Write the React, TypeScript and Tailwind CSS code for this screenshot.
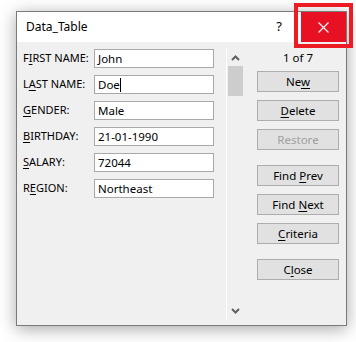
import React from 'react';

const font = { fontFamily: '"Noto Sans", "Open Sans", sans-serif' };

function Mn({ children }: { children: React.ReactNode }) {
    return <span className="underline underline-offset-[2px] decoration-1">{children}</span>;
}

const fields: { label: React.ReactNode; value: string; caret?: boolean }[] = [
    { label: <>F<Mn>I</Mn>RST NAME:</>, value: 'John' },
    { label: <>L<Mn>A</Mn>ST NAME:</>, value: 'Doe', caret: true },
    { label: <><Mn>G</Mn>ENDER:</>, value: 'Male' },
    { label: <><Mn>B</Mn>IRTHDAY:</>, value: '21-01-1990' },
    { label: <><Mn>S</Mn>ALARY:</>, value: '72044' },
    { label: <>R<Mn>E</Mn>GION:</>, value: 'Northeast' },
];

function Btn({ children, disabled, className = '' }: { children: React.ReactNode; disabled?: boolean; className?: string }) {
    return (
        <div
            className={`h-[21px] w-[82px] border border-[#adadad] bg-[#e1e1e1] flex items-center justify-center text-[11.5px] ${
                disabled ? 'text-[#a0a0a0]' : 'text-black'
            } ${className}`}
        >
            <span className="whitespace-pre">{children}</span>
        </div>
    );
}

export default function App() {
    return (
        <div className="relative w-[356px] h-[342px] bg-white overflow-hidden" style={font}>
            <div className="absolute left-[16px] top-[11px] w-[331px] h-[315px] border border-[#7a7a7a] bg-[#f0f0f0] shadow-[0_3px_16px_rgba(0,0,0,0.35)] flex flex-col">
                {/* Title bar */}
                <div className="h-[30px] bg-white flex items-center shrink-0">
                    <span className="ml-[9px] text-[12px] text-black">Data_Table</span>
                    <span className="ml-auto mr-[19px] text-[13px] text-black">?</span>
                    <div className="w-[45px] h-[30px] bg-[#e81123] flex items-center justify-center">
                        <svg width="11" height="11" viewBox="0 0 11 11">
                            <path d="M0.5 0.5 L10.5 10.5 M10.5 0.5 L0.5 10.5" stroke="white" strokeWidth="1.1" />
                        </svg>
                    </div>
                </div>

                {/* Body */}
                <div className="flex pt-[7px]">
                    {/* Fields */}
                    <div className="w-[209px] pl-[6px] flex flex-col gap-[7px]">
                        {fields.map((f, i) => (
                            <div key={i} className="flex items-center h-[19px]">
                                <div className="w-[71px] text-[11px] text-black whitespace-nowrap">{f.label}</div>
                                <div className="w-[120px] h-[19px] bg-white border border-[#a9a9a9] flex items-center pl-[3px] text-[11.5px] text-black">
                                    {f.value}
                                    {f.caret && <span className="inline-block w-px h-[14px] bg-black" />}
                                </div>
                            </div>
                        ))}
                    </div>

                    {/* Scrollbar */}
                    <div className="w-[17px] h-[270px] border-l border-white flex flex-col items-center">
                        <div className="h-[17px] flex items-center justify-center">
                            <svg width="9" height="6" viewBox="0 0 9 6">
                                <path d="M1 5 L4.5 1.5 L8 5" stroke="#606060" strokeWidth="2" fill="none" />
                            </svg>
                        </div>
                        <div className="w-[15px] h-[30px] bg-[#cdcdcd] ml-[1px]" />
                        <div className="mt-auto h-[17px] flex items-center justify-center">
                            <svg width="9" height="6" viewBox="0 0 9 6">
                                <path d="M1 1 L4.5 4.5 L8 1" stroke="#606060" strokeWidth="2" fill="none" />
                            </svg>
                        </div>
                    </div>

                    {/* Buttons */}
                    <div className="ml-[14px] w-[82px] flex flex-col">
                        <div className="h-[17px] flex items-center justify-center text-[11.5px] text-black">1 of 7</div>
                        <Btn className="mt-[5px]">Ne<Mn>w</Mn></Btn>
                        <Btn className="mt-[8px]"><Mn>D</Mn>elete</Btn>
                        <Btn className="mt-[8px]" disabled>Restore</Btn>
                        <Btn className="mt-[15px]">Find <Mn>P</Mn>rev</Btn>
                        <Btn className="mt-[8px]">Find <Mn>N</Mn>ext</Btn>
                        <Btn className="mt-[8px]"><Mn>C</Mn>riteria</Btn>
                        <Btn className="mt-[15px]">C<Mn>l</Mn>ose</Btn>
                    </div>
                </div>
            </div>

            {/* Red highlight annotation */}
            <div className="absolute left-[294px] top-[3px] w-[59px] h-[45px] border-[4px] border-[#ed1c24]" />
        </div>
    );
}
